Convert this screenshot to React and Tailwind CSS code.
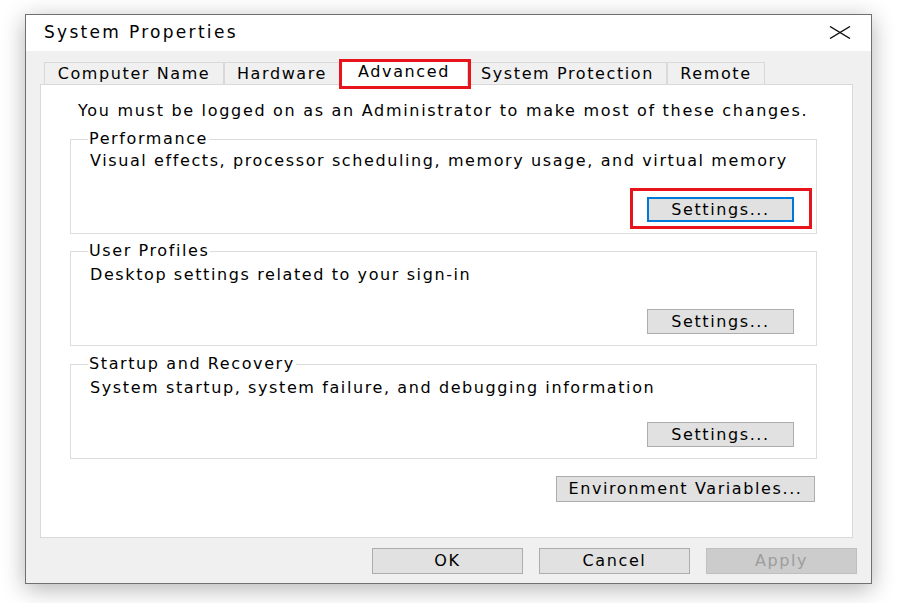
import React from "react";

const font = { fontFamily: '"DejaVu Sans", "Liberation Sans", sans-serif' };

function Btn({ children, className = "", focused = false, disabled = false }) {
  return (
    <div
      className={
        "flex items-center justify-center text-[16px] tracking-[1.6px] " +
        (disabled
          ? "bg-[#cccccc] border border-[#bfbfbf] text-[#9d9d9d] "
          : focused
          ? "bg-[#e1e1e1] border-2 border-[#0078d7] text-black "
          : "bg-[#e1e1e1] border border-[#adadad] text-black ") +
        className
      }
    >
      {children}
    </div>
  );
}

function Group({ title, desc, mt, highlight, descMt }) {
  return (
    <div className={"border border-[#dcdcdc] h-[95px] flex flex-col pl-[17px] pr-[22px] " + mt}>
      <div className="-mt-[11px] h-[20px] leading-[20px]">
        <span className="bg-white px-[1px]">{title}</span>
      </div>
      <div className={"h-[22px] leading-[22px] ml-[2px] " + descMt}>{desc}</div>
      <div className="mt-auto mb-[11px] self-end relative">
        <Btn className="w-[147px] h-[25px]" focused={highlight}>
          Settings...
        </Btn>
        {highlight && (
          <div className="absolute -left-[17px] -top-[9px] w-[182px] h-[41px] border-[3px] border-[#e8141c] pointer-events-none" />
        )}
      </div>
    </div>
  );
}

export default function App() {
  const tabs = [
    { label: "Computer Name", w: "w-[180px]" },
    { label: "Hardware", w: "w-[116px]" },
    { label: "Advanced", w: "w-[128px]", sel: true },
    { label: "System Protection", w: "w-[199px]" },
    { label: "Remote", w: "w-[98px]" },
  ];
  return (
    <div className="w-[900px] h-[603px] bg-white overflow-hidden pt-[14px] pl-[25px] text-black" style={font}>
      <div className="w-[847px] h-[570px] border border-[#707070] shadow-[0_5px_22px_rgba(0,0,0,0.3)] flex flex-col bg-[#f0f0f0] text-[16px] tracking-[1.6px]">
        {/* Title bar */}
        <div className="h-[36px] bg-white flex items-center justify-between pl-[18px] pr-[20px] shrink-0">
          <span className="text-[17px] tracking-[2.3px]">System Properties</span>
          <svg width="22" height="13" viewBox="0 0 22 13" className="mt-[-2px]">
            <path d="M1 0.5 L21 12.5 M21 0.5 L1 12.5" stroke="#111" strokeWidth="1.4" fill="none" />
          </svg>
        </div>
        {/* Body */}
        <div className="flex-1 flex flex-col pt-[7px] pl-[14px] pr-[18px]">
          {/* Tabs */}
          <div className="h-[26px] flex items-end pl-[4px] shrink-0">
            {tabs.map((t) =>
              t.sel ? (
                <div
                  key={t.label}
                  className={"relative z-10 -mb-px h-[26px] bg-white border border-b-0 border-[#d9d9d9] flex items-center justify-center " + t.w}
                >
                  <span className="-mt-[2px]">{t.label}</span>
                  <div className="absolute -left-[2px] -top-[1px] w-[132px] h-[30px] border-[3px] border-[#e8141c]" />
                </div>
              ) : (
                <div
                  key={t.label}
                  className={"h-[22px] bg-[#f0f0f0] border border-b-0 border-[#d9d9d9] flex items-center justify-center " + t.w}
                >
                  {t.label}
                </div>
              )
            )}
          </div>
          {/* Panel */}
          <div className="h-[454px] bg-white border border-[#d9d9d9] flex flex-col pl-[29px] pr-[35px] shrink-0">
            <div className="mt-[16px] h-[20px] leading-[20px] pl-[8px] tracking-[1.7px]">
              You must be logged on as an Administrator to make most of these changes.
            </div>
            <Group
              title="Performance"
              desc="Visual effects, processor scheduling, memory usage, and virtual memory"
              mt="mt-[18px]"
              descMt="mt-[1px]"
              highlight
            />
            <Group
              title="User Profiles"
              desc="Desktop settings related to your sign-in"
              mt="mt-[17px]"
              descMt="mt-[3px]"
            />
            <Group
              title="Startup and Recovery"
              desc="System startup, system failure, and debugging information"
              mt="mt-[18px]"
              descMt="mt-[3px]"
            />
            <div className="mt-[17px] self-end mr-[2px]">
              <Btn className="w-[259px] h-[26px]">Environment Variables...</Btn>
            </div>
          </div>
          {/* Bottom buttons */}
          <div className="mt-[10px] flex justify-end gap-[16px] -mr-[4px]">
            <Btn className="w-[151px] h-[26px]">OK</Btn>
            <Btn className="w-[151px] h-[26px]">Cancel</Btn>
            <Btn className="w-[151px] h-[26px]" disabled>
              Apply
            </Btn>
          </div>
        </div>
      </div>
    </div>
  );
}
